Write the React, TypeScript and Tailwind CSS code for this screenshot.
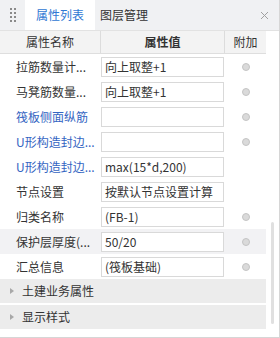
const rows = [
  { name: '拉筋数量计...', value: '向上取整+1', blue: false, dot: true },
  { name: '马凳筋数量...', value: '向上取整+1', blue: false, dot: true },
  { name: '筏板侧面纵筋', value: '', blue: true, dot: true },
  { name: 'U形构造封边...', value: '', blue: true, dot: true },
  { name: 'U形构造封边...', value: 'max(15*d,200)', blue: true, dot: false },
  { name: '节点设置', value: '按默认节点设置计算', blue: false, dot: false },
  { name: '归类名称', value: '(FB-1)', blue: false, dot: true },
  { name: '保护层厚度(...', value: '50/20', blue: false, dot: true, hover: true },
  { name: '汇总信息', value: '(筏板基础)', blue: false, dot: true },
];

function Handle() {
  return (
    <div className="grid grid-cols-2 gap-x-[2px] gap-y-[2px] w-[6px]">
      {Array.from({ length: 8 }).map((_, i) => (
        <span key={i} className="w-[2px] h-[2px] bg-[#8a8a8a]" />
      ))}
    </div>
  );
}

function Dot() {
  return <span className="w-[8px] h-[8px] rounded-full bg-[#dadada] border border-[#c4c4c4]" />;
}

function GroupRow({ label }: { label: string }) {
  return (
    <div className="h-[24px] bg-[#ececec] flex items-center">
      <svg width="4" height="6" viewBox="0 0 4 6" className="ml-[10px] mr-[8px]">
        <path d="M0 0 L4 3 L0 6 Z" fill="#a8a8a8" />
      </svg>
      <span className="text-[12px] text-[#333]">{label}</span>
    </div>
  );
}

export default function App() {
  return (
    <div
      className="w-[280px] h-[338px] bg-white flex flex-col border-r border-b border-[#d6d6d6] overflow-hidden"
      style={{ fontFamily: '"Noto Sans CJK SC", "Microsoft YaHei", sans-serif' }}
    >
      <div className="h-[31px] flex items-stretch bg-[#f0f1f3] border-b border-[#e2e2e2]">
        <div className="w-[25px] flex items-center justify-center">
          <Handle />
        </div>
        <div className="w-[70px] bg-white flex items-center justify-center text-[12px] text-[#2f78d4]">
          属性列表
        </div>
        <div className="px-[5px] flex items-center text-[12px] text-[#333]">图层管理</div>
        <div className="ml-auto mr-[10px] flex items-center">
          <svg width="9" height="9" viewBox="0 0 9 9">
            <path d="M1 1 L8 8 M8 1 L1 8" stroke="#a0a0a0" strokeWidth="1" />
          </svg>
        </div>
      </div>

      <div className="flex flex-1 min-h-0">
        <div className="w-[266px] flex flex-col">
          <div className="h-[23px] grid grid-cols-[101px_124px_41px] bg-[#f3f3f3] border-b border-[#dedede] text-[12px] text-[#333]">
            <div className="flex items-center justify-center border-r border-[#dcdcdc]">属性名称</div>
            <div className="flex items-center justify-center font-bold border-r border-[#dcdcdc]">属性值</div>
            <div className="flex items-center justify-center">附加</div>
          </div>
          {rows.map((r, i) => (
            <div
              key={i}
              className={`h-[25px] grid grid-cols-[101px_124px_41px] items-center text-[12px] ${
                r.hover ? 'bg-[#f2f2f4]' : 'bg-white'
              }`}
            >
              <div className={`pl-[16px] whitespace-nowrap ${r.blue ? 'text-[#3465c2]' : 'text-[#333]'}`}>{r.name}</div>
              <div className="h-[20px] mr-[1px] border border-[#d9d9d9] bg-white flex items-center pl-[3px] text-[#333] whitespace-nowrap overflow-hidden">
                {r.value}
              </div>
              <div className="flex items-center justify-center">{r.dot && <Dot />}</div>
            </div>
          ))}
          <GroupRow label="土建业务属性" />
          <div className="h-[2px]" />
          <GroupRow label="显示样式" />
        </div>
        <div className="flex-1 flex justify-center">
          <div className="w-[3px] h-[102px] mt-[191px] bg-[#e0e0e0] rounded-full" />
        </div>
      </div>
    </div>
  );
}
